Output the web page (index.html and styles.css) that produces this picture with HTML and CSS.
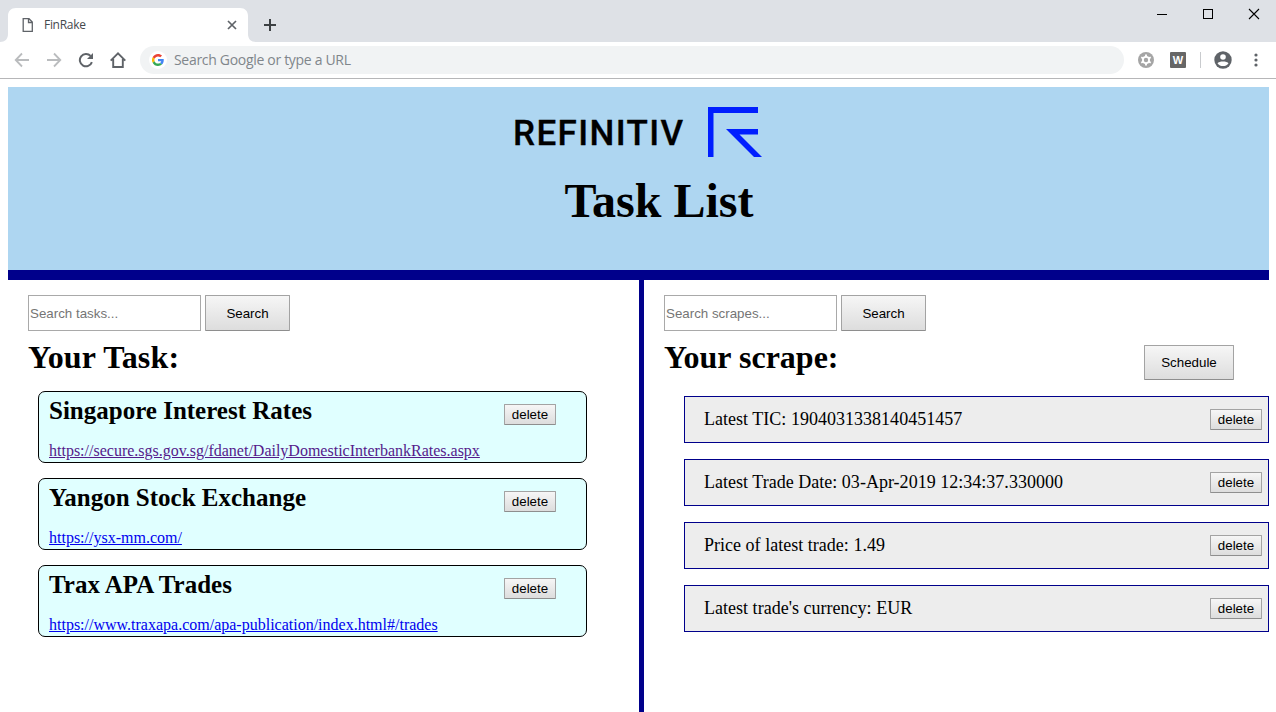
FILE: index.html
```html
<!DOCTYPE html>
<html lang="en">
<head>
<meta charset="utf-8">
<title>FinRake</title>
<link rel="stylesheet" href="styles.css">
</head>
<body>
<div class="tabstrip">
  <svg class="tab-shape" width="264" height="34" viewBox="0 0 264 34"><path fill="#fff" d="M0 34C5 34 8 31 8 26V8C8 3 11 0 16 0H240C245 0 248 3 248 8V26C248 31 251 34 256 34Z"/></svg>
  <div class="tab">
    <svg width="12" height="16" viewBox="0 0 12 16" fill="none" stroke="#5f6368" stroke-width="1.3"><path d="M1.2 1.7H7L10.3 5V14.3H1.2ZM6.5 1.7V5.5H10.3"/></svg>
    <span class="tab-title">FinRake</span>
    <svg width="10" height="10" viewBox="0 0 10 10" stroke="#5f6368" stroke-width="1.7"><path d="M1 1L9 9M9 1L1 9"/></svg>
  </div>
  <svg class="new-tab" width="12" height="12" viewBox="0 0 12 12" stroke="#3c4043" stroke-width="2"><path d="M6 0V12M0 6H12"/></svg>
  <div class="window-controls">
    <svg width="12" height="12" viewBox="0 0 12 12" stroke="#000"><path d="M1 6.5H11"/></svg>
    <svg width="12" height="12" viewBox="0 0 12 12" stroke="#000" fill="none"><rect x="1.5" y="1.5" width="9" height="9"/></svg>
    <svg width="12" height="12" viewBox="0 0 12 12" stroke="#000" stroke-width="1.1"><path d="M1 1L11 11M11 1L1 11"/></svg>
  </div>
</div>
<div class="toolbar">
  <div class="nav">
    <svg width="16" height="16" viewBox="0 0 16 16" fill="none" stroke="#babcbe" stroke-width="1.8"><path d="M15 8H2M8 1.5L1.7 8L8 14.5"/></svg>
    <svg width="16" height="16" viewBox="0 0 16 16" fill="none" stroke="#babcbe" stroke-width="1.8"><path d="M1 8H14M8 1.5L14.3 8L8 14.5"/></svg>
    <svg width="16" height="16" viewBox="0 0 16 16"><path fill="none" stroke="#5f6368" stroke-width="2" d="M13.9 10.2A6.2 6.2 0 1 1 12.6 3.9"/><path fill="#5f6368" d="M15 1V7H9Z"/></svg>
    <svg width="16" height="16" viewBox="0 0 16 16" fill="none" stroke="#5f6368" stroke-width="1.9"><path d="M.7 8.6L8 1.4L15.3 8.6M3.2 7V15H12.8V7"/></svg>
  </div>
  <div class="omnibox">
    <span class="google"><svg width="12" height="12" viewBox="0 0 48 48"><path fill="#ea4335" d="M24 9.500c3.540 0 6.710 1.220 9.210 3.600l6.850-6.850C35.900 2.380 30.470 0 24 0 14.620 0 6.510 5.380 2.560 13.220l7.980 6.190C12.430 13.720 17.740 9.500 24 9.500z"/><path fill="#4285f4" d="M46.980 24.550c0-1.570-.150-3.090-.380-4.550H24v9.020h12.940c-.580 2.960-2.260 5.480-4.780 7.180l7.730 6c4.510-4.180 7.090-10.360 7.090-17.650z"/><path fill="#fbbc05" d="M10.530 28.590A14.500 14.500 0 0 1 10.530 19.410l-7.980-6.190a24 24 0 0 0 0 21.560z"/><path fill="#34a853" d="M24 48c6.480 0 11.930-2.130 15.890-5.810l-7.730-6C30 37.640 27.240 38.490 24 38.490c-6.260 0-11.570-4.220-13.470-9.910l-7.980 6.190C6.510 42.620 14.620 48 24 48z"/></svg></span>
    <span class="omni-text">Search Google or type a URL</span>
  </div>
  <div class="extensions">
    <svg width="16" height="16" viewBox="0 0 16 16"><circle cx="8" cy="8" r="8" fill="#a5a5a5"/><circle cx="8" cy="8" r="3.1" fill="none" stroke="#fff" stroke-width="1.8"/><path d="M8 2.500V5M8 11V13.500M3.240 5.250L5.400 6.500M10.600 9.500L12.760 10.750M3.240 10.750L5.400 9.500M10.600 6.500L12.760 5.250" stroke="#fff" stroke-width="1.900"/></svg>
    <span class="word-badge">W</span>
    <span class="separator"></span>
    <svg width="18" height="18" viewBox="0 0 18 18"><circle cx="9" cy="9" r="8.700" fill="#5f6368"/><circle cx="9" cy="6" r="2.800" fill="#fff"/><path fill="#fff" d="M3.500 12.200C5 9.800 13 9.800 14.500 12.200C12 16 6 16 3.500 12.200Z"/></svg>
    <svg class="dots" width="4" height="14" viewBox="0 0 4 14" fill="#5f6368"><circle cx="2" cy="2" r="1.600"/><circle cx="2" cy="7" r="1.600"/><circle cx="2" cy="12" r="1.600"/></svg>
  </div>
</div>

<main class="page">
  <header class="banner">
    <svg class="logo" width="248" height="50" viewBox="0 0 248 50">
      <text class="logo-text" x="-1" y="37.5" textLength="170" lengthAdjust="spacing">REFINITIV</text>
      <path fill="#001eff" d="M194 0H244V6H199.500V50H194ZM212 22H244V27.500H225.500L248 50H240Z"/>
    </svg>
    <h1 class="page-title">Task List</h1>
  </header>
  <div class="columns">
    <section class="tasks">
      <form class="search"><input class="search-input" placeholder="Search tasks..."><button class="btn search-btn" type="button">Search</button></form>
      <h2 class="heading heading-task">Your Task:</h2>
      <div class="task-list">
        <article class="task"><div><h3 class="task-name">Singapore Interest Rates</h3><a class="link visited">https://secure.sgs.gov.sg/fdanet/DailyDomesticInterbankRates.aspx</a></div><button class="btn delete">delete</button></article>
        <article class="task"><div><h3 class="task-name">Yangon Stock Exchange</h3><a class="link">https://ysx-mm.com/</a></div><button class="btn delete">delete</button></article>
        <article class="task"><div><h3 class="task-name">Trax APA Trades</h3><a class="link">https://www.traxapa.com/apa-publication/index.html#/trades</a></div><button class="btn delete">delete</button></article>
      </div>
    </section>
    <section class="scrapes">
      <form class="search"><input class="search-input" placeholder="Search scrapes..."><button class="btn search-btn" type="button">Search</button></form>
      <div class="scrape-head"><h2 class="heading">Your scrape:</h2><button class="btn schedule">Schedule</button></div>
      <div class="scrape-list">
        <div class="scrape"><span>Latest TIC: 1904031338140451457</span><button class="btn delete">delete</button></div>
        <div class="scrape"><span>Latest Trade Date: 03-Apr-2019 12:34:37.330000</span><button class="btn delete">delete</button></div>
        <div class="scrape"><span>Price of latest trade: 1.49</span><button class="btn delete">delete</button></div>
        <div class="scrape"><span>Latest trade's currency: EUR</span><button class="btn delete">delete</button></div>
      </div>
    </section>
  </div>
</main>
</body>
</html>
```
FILE: styles.css
```css
* { box-sizing: border-box; }
html, body { height: 100%; }
body {
  margin: 0;
  display: flex;
  flex-direction: column;
  overflow: hidden;
  background: #fff;
  color: #000;
  font-family: "Liberation Serif", "Times New Roman", serif;
}
svg { display: block; flex: none; }
h1, h2, h3 { margin: 0; }

/* Browser frame */
.tabstrip {
  position: relative;
  flex: none;
  display: flex;
  height: 42px;
  background: #dee1e6;
}
.tab-shape { position: absolute; left: 0; top: 8px; }
.tab {
  position: relative;
  display: flex;
  align-items: center;
  width: 248px;
  padding: 8px 11px 0 22px;
}
.tab-title {
  flex: 1;
  padding: 0 0 1px 10px;
  font: 12px "Open Sans", sans-serif;
  letter-spacing: -0.3px;
  color: #45494d;
}
.new-tab { margin: 19px 0 0 16px; }
.window-controls { display: flex; gap: 34px; margin: 8px 16px 0 auto; }
.toolbar {
  flex: none;
  display: flex;
  align-items: center;
  height: 37px;
  border-bottom: 1px solid #b6b6b8;
}
.nav { display: flex; gap: 16px; margin-left: 14px; }
.omnibox {
  display: flex;
  align-items: center;
  width: 984px;
  height: 28px;
  margin-left: 14px;
  padding-left: 9px;
  border-radius: 14px;
  background: #f1f3f4;
}
.google {
  display: flex;
  align-items: center;
  justify-content: center;
  width: 18px;
  height: 18px;
  border-radius: 50%;
  background: #fff;
}
.omni-text {
  padding: 0 0 1px 7px;
  font: 14px "Open Sans", sans-serif;
  letter-spacing: -0.31px;
  color: #80868b;
}
.extensions { display: flex; align-items: center; margin-left: 14px; }
.word-badge {
  width: 16px;
  height: 16px;
  margin-left: 16px;
  border-radius: 1px;
  background: #666;
  color: #fff;
  font: bold 11px/16px "Liberation Sans", sans-serif;
  text-align: center;
}
.separator { width: 1px; height: 16px; margin: 0 13px 0 14px; background: #c9cbce; }
.dots { margin-left: 22px; }

/* Page */
.page {
  flex: 1;
  display: flex;
  flex-direction: column;
  margin: 8px 7px 0 8px;
}
.banner {
  flex: none;
  height: 193px;
  padding-top: 20px;
  border-bottom: 10px solid #00008b;
  background: #aed6f1;
}
.logo { margin-left: 506px; overflow: visible; }
.logo-text { font: 500 35px Roboto, sans-serif; stroke: #000; stroke-width: 0.3px; }
.page-title {
  margin-top: 17px;
  padding-left: 41px;
  font-size: 48px;
  line-height: 54px;
  text-align: center;
}
.columns { flex: 1; display: flex; }
.tasks { width: 636px; padding: 15px 20px 0; border-right: 5px solid #00008b; }
.scrapes { flex: 1; padding: 15px 0 0 20px; }
.search { display: flex; gap: 4px; }
.search-input {
  width: 173px;
  height: 36px;
  padding: 1px;
  border: 1px solid #a9a9a9;
  font: 13.33px "Liberation Sans", Arial, sans-serif;
}
.search-input::placeholder { color: #757575; }
.btn {
  flex: none;
  padding: 0;
  border: 1px solid #a3a3a3;
  border-bottom-color: #8e8e8e;
  border-radius: 1px;
  background: linear-gradient(#f6f6f6, #ddd);
  color: #000;
  font: 13.33px "Liberation Sans", Arial, sans-serif;
}
.search-btn { width: 85px; height: 36px; }
.heading { margin-top: 8px; font-size: 32px; line-height: 37px; }
.heading-task { letter-spacing: 0.15px; }
.task-list {
  display: flex;
  flex-direction: column;
  gap: 15px;
  margin: 15px 0 0 10px;
}
.task {
  display: flex;
  justify-content: space-between;
  width: 549px;
  height: 72px;
  padding: 0 30px 0 10px;
  border: 1px solid #000;
  border-radius: 7px;
  background: #e0ffff;
}
.task-name { margin: 5px 0 17px; font-size: 25px; line-height: 28px; }
.link {
  display: block;
  color: #0000ee;
  font-size: 16px;
  line-height: 18px;
  text-decoration: underline;
}
.visited { color: #551a8b; }
.delete { width: 52px; height: 21px; }
.task .delete { margin-top: 12px; }
.scrape-head { display: flex; justify-content: space-between; padding-right: 35px; }
.schedule { width: 90px; height: 35px; margin-top: 14px; }
.scrape-list {
  display: flex;
  flex-direction: column;
  gap: 16px;
  margin: 16px 0 0 20px;
}
.scrape {
  display: flex;
  align-items: center;
  justify-content: space-between;
  height: 47px;
  padding: 0 6px 0 19px;
  border: 1px solid #00008b;
  background: #ededed;
  font-size: 18px;
}
.scrape span { letter-spacing: 0.02px; }
```
